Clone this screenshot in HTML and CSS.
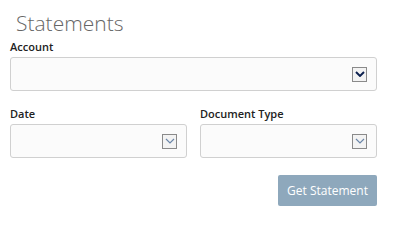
FILE: index.html
```html
<!DOCTYPE html>
<html>
<head>
<meta charset="utf-8">
<link rel="stylesheet" href="styles.css">
</head>
<body>
<div class="page">
  <h1 class="title">Statements</h1>
  <div class="field">
    <label class="label">Account</label>
    <div class="select">
      <span class="arrow arrow-dark">
        <svg width="10" height="6" viewBox="0 0 10 6"><path d="M1 1 L5 5 L9 1" fill="none" stroke="#0b1f4e" stroke-width="1.9"/></svg>
      </span>
    </div>
  </div>
  <div class="row">
    <div class="field">
      <label class="label">Date</label>
      <div class="select">
        <span class="arrow">
          <svg width="10" height="6" viewBox="0 0 10 6"><path d="M1 1 L5 5 L9 1" fill="none" stroke="#6b86a8" stroke-width="1.2"/></svg>
        </span>
      </div>
    </div>
    <div class="field">
      <label class="label">Document Type</label>
      <div class="select">
        <span class="arrow">
          <svg width="10" height="6" viewBox="0 0 10 6"><path d="M1 1 L5 5 L9 1" fill="none" stroke="#6b86a8" stroke-width="1.2"/></svg>
        </span>
      </div>
    </div>
  </div>
  <div class="actions">
    <button class="btn">Get Statement</button>
  </div>
</div>
</body>
</html>
```
FILE: styles.css
```css
* { box-sizing: border-box; }
html, body { margin: 0; padding: 0; background: #fff; }
body { font-family: "Open Sans", "Liberation Sans", sans-serif; color: #333; }
.page { width: 377px; padding: 10px 0 0 10px; display: flex; flex-direction: column; }
.title { margin: 0 0 3px 6px; font-size: 21px; font-weight: 300; color: #666; line-height: 27px; }
.field { display: flex; flex-direction: column; }
.label { font-size: 11px; font-weight: 600; color: #222; line-height: 14px; margin-bottom: 3px; }
.select { height: 34px; border: 1px solid #d0d0d0; border-radius: 3px; background: #fbfbfb; display: flex; align-items: center; justify-content: flex-end; padding-right: 9px; }
.arrow { width: 15px; height: 15px; border: 1px solid #8a8a8a; background: #f3f3f3; display: flex; align-items: center; justify-content: center; }
.row { display: grid; grid-template-columns: 1fr 1fr; column-gap: 13px; margin-top: 16px; }
.actions { display: flex; justify-content: flex-end; margin-top: 17px; }
.btn { width: 99px; height: 31px; border: none; border-radius: 2px; background: #8ea8bc; color: #fff; font-family: "Open Sans", "Liberation Sans", sans-serif; font-size: 12px; padding: 0; }
```
